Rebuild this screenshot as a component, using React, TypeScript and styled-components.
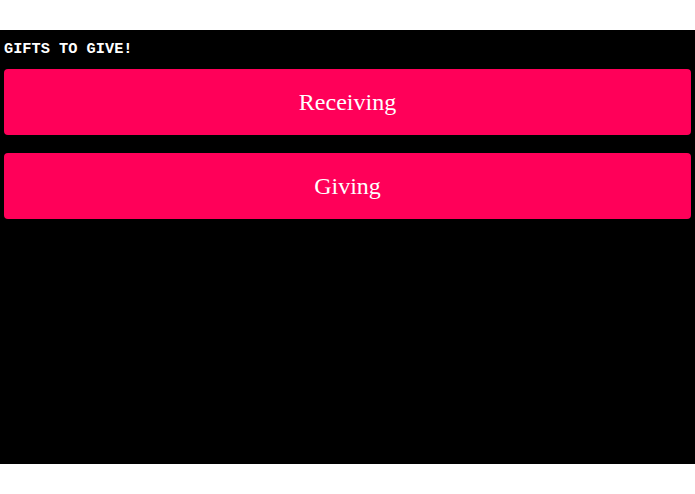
import React from 'react';
import styled, { createGlobalStyle } from 'styled-components';

const GlobalStyle = createGlobalStyle`
  html, body {
    margin: 0;
    padding: 0;
    background: #ffffff;
  }
`;

const Page = styled.div`
  padding: 30px 0;
`;

const Panel = styled.main`
  background: #000000;
  height: 434px;
  padding: 0 4px;
  box-sizing: border-box;
  display: flex;
  flex-direction: column;
`;

const Title = styled.h1`
  margin: 11px 0 11px;
  font-family: 'Liberation Mono', 'Courier New', monospace;
  font-weight: bold;
  font-size: 15.3px;
  line-height: 17px;
  color: #ffffff;
`;

const Choices = styled.div`
  display: flex;
  flex-direction: column;
  gap: 18px;
`;

const Choice = styled.button`
  height: 66px;
  border: none;
  border-radius: 4px;
  background: #ff0059;
  color: #ffffff;
  font-family: 'Liberation Serif', 'Times New Roman', serif;
  font-size: 24px;
  cursor: pointer;
`;

const App: React.FC = () => (
  <>
    <GlobalStyle />
    <Page>
      <Panel>
        <Title>GIFTS TO GIVE!</Title>
        <Choices>
          <Choice>Receiving</Choice>
          <Choice>Giving</Choice>
        </Choices>
      </Panel>
    </Page>
  </>
);

export default App;
